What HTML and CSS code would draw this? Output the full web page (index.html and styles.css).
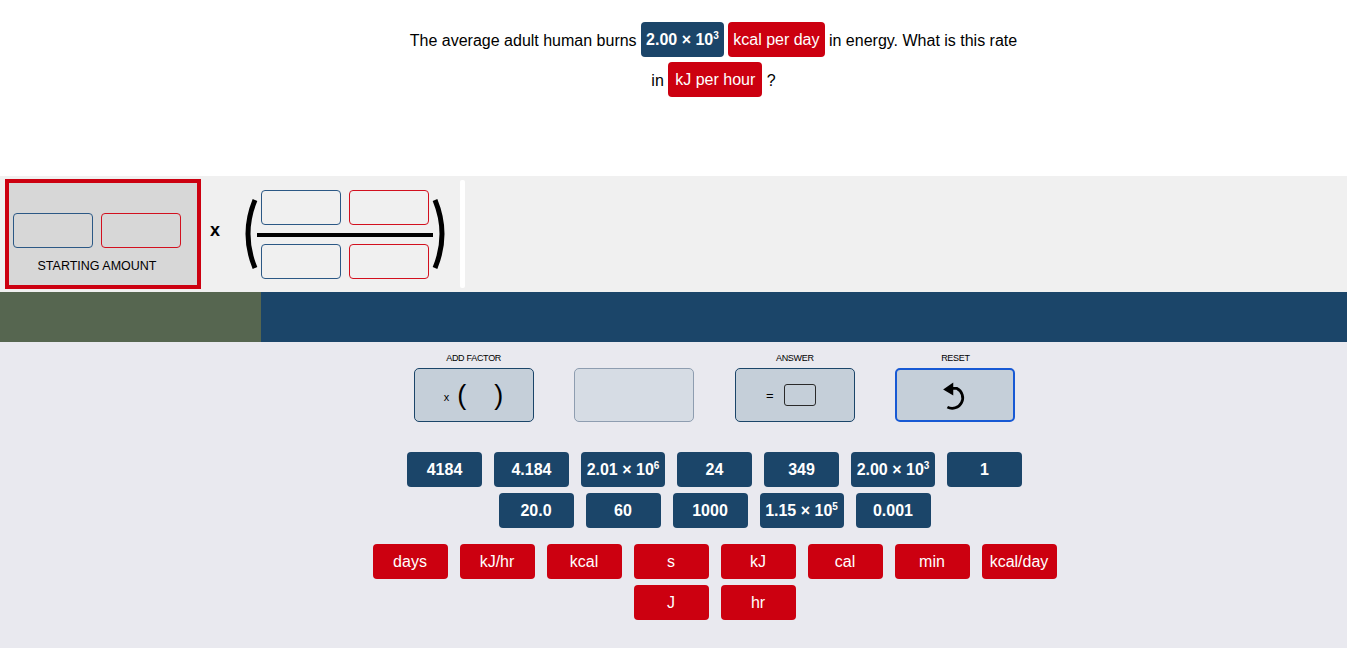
FILE: index.html
```html
<!DOCTYPE html>
<html>
<head>
<meta charset="utf-8">
<link rel="stylesheet" href="styles.css">
</head>
<body>
<div class="question">
  <p class="qtext">The average adult human burns <span class="qtile blue">2.00 × 10<sup>3</sup></span> <span class="qtile red">kcal per day</span> in energy. What is this rate<br>in <span class="qtile red wide">kJ per hour</span> ?</p>
</div>

<div class="work">
  <div class="start">
    <div class="start-inner">
      <div class="slots">
        <div class="slot slot-blue"></div>
        <div class="slot slot-red"></div>
      </div>
      <div class="start-label">STARTING AMOUNT</div>
    </div>
  </div>
  <div class="times">x</div>
  <div class="factor">
    <svg class="paren" width="18" height="72" viewBox="0 0 18 72"><path d="M15 2 Q1 36 15 70" fill="none" stroke="#000" stroke-width="5"/></svg>
    <div class="frac">
      <div class="slots">
        <div class="slot slot-blue"></div>
        <div class="slot slot-red"></div>
      </div>
      <div class="bar"></div>
      <div class="slots">
        <div class="slot slot-blue"></div>
        <div class="slot slot-red"></div>
      </div>
    </div>
    <svg class="paren" width="18" height="72" viewBox="0 0 18 72"><path d="M3 2 Q17 36 3 70" fill="none" stroke="#000" stroke-width="5"/></svg>
  </div>
  <div class="divider"></div>
</div>

<div class="band">
  <div class="band-green"></div>
  <div class="band-blue"></div>
</div>

<div class="panel">
  <div class="controls">
    <div class="ctrl">
      <div class="ctrl-label">ADD FACTOR</div>
      <div class="btn">
        <span class="btn-x">x</span><span class="btn-paren">(</span><span class="btn-gap"></span><span class="btn-paren">)</span>
      </div>
    </div>
    <div class="ctrl">
      <div class="ctrl-label"></div>
      <div class="btn btn-disabled"></div>
    </div>
    <div class="ctrl">
      <div class="ctrl-label">ANSWER</div>
      <div class="btn btn-answer">
        <span class="btn-eq">=</span><span class="btn-box"></span>
      </div>
    </div>
    <div class="ctrl">
      <div class="ctrl-label">RESET</div>
      <div class="btn btn-focus">
        <svg class="reset-icon" width="32" height="32" viewBox="0 0 30 30">
          <path d="M10 7 H15 A9.5 9.5 0 1 1 6 24.5" fill="none" stroke="#000" stroke-width="2.6"/>
          <polygon points="2,8 11.5,1.5 11.5,13.5" fill="#000"/>
        </svg>
      </div>
    </div>
  </div>

  <div class="tiles">
    <div class="tile blue">4184</div>
    <div class="tile blue">4.184</div>
    <div class="tile blue sci">2.01 × 10<sup>6</sup></div>
    <div class="tile blue">24</div>
    <div class="tile blue">349</div>
    <div class="tile blue sci">2.00 × 10<sup>3</sup></div>
    <div class="tile blue">1</div>
    <div class="tile blue">20.0</div>
    <div class="tile blue">60</div>
    <div class="tile blue">1000</div>
    <div class="tile blue sci">1.15 × 10<sup>5</sup></div>
    <div class="tile blue">0.001</div>
  </div>

  <div class="tiles units">
    <div class="tile red">days</div>
    <div class="tile red">kJ/hr</div>
    <div class="tile red">kcal</div>
    <div class="tile red">s</div>
    <div class="tile red">kJ</div>
    <div class="tile red">cal</div>
    <div class="tile red">min</div>
    <div class="tile red">kcal/day</div>
    <div class="tile red">J</div>
    <div class="tile red">hr</div>
  </div>
</div>
</body>
</html>
```

FILE: styles.css
```css
html, body {
  margin: 0;
  padding: 0;
}
body {
  font-family: "Liberation Sans", Arial, sans-serif;
  color: #000;
  background: #fff;
  width: 1347px;
  height: 648px;
  overflow: hidden;
}
sup {
  font-size: 10px;
  line-height: 0;
  vertical-align: 6px;
}

/* question */
.question {
  height: 176px;
  box-sizing: border-box;
  padding: 21px 0 0 80px;
}
.qtext {
  margin: 0;
  text-align: center;
  font-size: 16px;
  line-height: 40px;
}
.qtile {
  display: inline-block;
  height: 35px;
  line-height: 35px;
  padding: 0 5px;
  border-radius: 4px;
  color: #fff;
  vertical-align: middle;
  margin-top: -4px;
}
.qtile.wide {
  padding: 0 7px;
}
.qtile.blue { font-weight: bold; }
.blue { background: #1b4569; }
.red { background: #cc0010; }

/* work area */
.work {
  height: 116px;
  background: #f0f0f0;
  display: flex;
  align-items: center;
  padding-left: 5px;
}
.start {
  width: 196px;
  height: 110px;
  box-sizing: border-box;
  border: 4px solid #cc0010;
  background: #d7d7d7;
  padding: 30px 0 0 4px;
}
.start-inner {
  width: 168px;
}
.slots {
  display: flex;
  gap: 8px;
}
.slot {
  width: 80px;
  height: 35px;
  box-sizing: border-box;
  border-radius: 4px;
}
.slot-blue { border: 1px solid #2b5885; }
.slot-red { border: 1px solid #d2101e; }
.start-label {
  text-align: center;
  font-size: 12.5px;
  margin-top: 10px;
  line-height: 16px;
}
.times {
  font-size: 18px;
  font-weight: bold;
  margin: -8px 0 0 9px;
}
.factor {
  display: flex;
  align-items: center;
  margin-left: 20px;
}
.paren { display: block; }
.frac {
  width: 176px;
  display: flex;
  flex-direction: column;
  margin: 0 -1px;
}
.frac .slots {
  padding-left: 4px;
}
.bar {
  height: 4px;
  background: #000;
  margin: 8px 0 7px;
}
.divider {
  width: 5px;
  height: 108px;
  background: #fff;
  border-radius: 2px;
  margin-left: 10px;
}

/* band */
.band {
  height: 50px;
  display: flex;
}
.band-green {
  width: 261px;
  background: #566650;
}
.band-blue {
  flex: 1;
  background: #1b4569;
}

/* panel */
.panel {
  height: 306px;
  background: #e9e9ef;
  box-sizing: border-box;
  padding: 11px 0 0 82px;
}
.controls {
  display: flex;
  justify-content: center;
  gap: 40.6px;
}
.ctrl {
  width: 120px;
}
.ctrl-label {
  height: 11px;
  line-height: 11px;
  font-size: 9px;
  letter-spacing: -0.3px;
  text-align: center;
  margin-bottom: 4px;
}
.btn {
  height: 54px;
  box-sizing: border-box;
  border: 1px solid #1b4569;
  border-radius: 5px;
  background: #c5cfd9;
  display: flex;
  align-items: center;
  justify-content: center;
}
.btn-disabled {
  background: #d6dce4;
  border-color: #8e9db0;
}
.btn-focus {
  border: 2px solid #1759d4;
}
.reset-icon {
  display: block;
  margin: 4px 0 0 4px;
}
.btn-x {
  font-size: 11px;
  margin: 3px 8px 0 0;
}
.btn-paren {
  font-size: 27px;
  line-height: 30px;
}
.btn-gap {
  width: 28px;
}
.btn-answer {
  padding-right: 8px;
}
.btn-eq {
  font-size: 13px;
  margin-right: 10px;
}
.btn-box {
  width: 32px;
  height: 22px;
  box-sizing: border-box;
  border: 1.5px solid #2a2a2a;
  border-radius: 3px;
}

/* tiles */
.tiles {
  width: 700px;
  margin: 30px auto 0;
  display: flex;
  flex-wrap: wrap;
  justify-content: center;
  gap: 6px 12px;
}
.tiles.units {
  margin-top: 16px;
}
.tile {
  width: 75px;
  height: 35px;
  line-height: 35px;
  border-radius: 4px;
  color: #fff;
  font-size: 16px;
  text-align: center;
  white-space: nowrap;
}
.tile.blue {
  font-weight: bold;
}
.tile.sci {
  width: 84px;
}
```
